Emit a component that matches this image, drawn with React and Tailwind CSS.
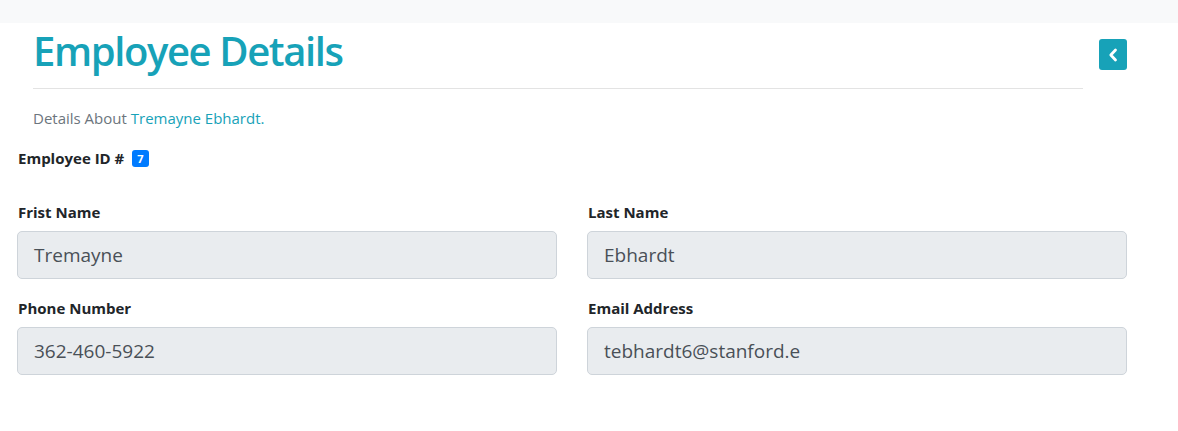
export default function App() {
  const font = { fontFamily: '"Open Sans", "Noto Sans", "Liberation Sans", sans-serif' };
  return (
    <div className="w-[1178px] h-[431px] bg-white text-[#212529]" style={font}>
      <div className="h-[23px] bg-[#f8f9fa]" />
      <div className="pl-[33px] pr-[51px] flex items-start">
        <div className="flex-1">
          <h1 className="text-[40px] leading-[48px] font-semibold text-[#17a2b8] mt-[4px] tracking-[-1.4px]">Employee Details</h1>
          <div className="mt-[13px] border-t border-[#e3e3e3]" />
          <p className="mt-[17px] text-[15px] leading-[24px] text-[#6c757d]">
            Details About <span className="text-[#17a2b8]">Tremayne Ebhardt.</span>
          </p>
        </div>
        <button className="ml-[16px] mt-[16px] w-[28px] h-[31px] rounded-[3px] bg-[#17a2b8] flex items-center justify-center">
          <svg width="10" height="14" viewBox="0 0 10 14">
            <path d="M7.5 2 L2.8 7 L7.5 12" fill="none" stroke="white" strokeWidth="2.8" strokeLinecap="round" strokeLinejoin="round" />
          </svg>
        </button>
      </div>
      <div className="pl-[18px] mt-[18px] flex items-center gap-[8px]">
        <span className="text-[15px] font-bold leading-[20px]">Employee ID #</span>
        <span className="h-[17px] px-[5px] rounded-[3px] bg-[#007bff] text-white text-[11px] font-bold leading-[17px]">7</span>
      </div>
      <div className="pl-[17px] w-[1127px] mt-[34px] grid grid-cols-2 gap-x-[30px]">
        <Field label="Frist Name" value="Tremayne" />
        <Field label="Last Name" value="Ebhardt" />
        <Field label="Phone Number" value="362-460-5922" />
        <Field label="Email Address" value="tebhardt6@stanford.e" />
      </div>
    </div>
  );
}

function Field({ label, value }) {
  return (
    <div className="mb-[19px]">
      <div className="pl-[1px] text-[15px] font-bold leading-[20px]">{label}</div>
      <div className="mt-[9px] h-[48px] rounded-[5px] border border-[#ced4da] bg-[#e9ecef] px-[16px] flex items-center text-[19px] text-[#495057]">
        {value}
      </div>
    </div>
  );
}
